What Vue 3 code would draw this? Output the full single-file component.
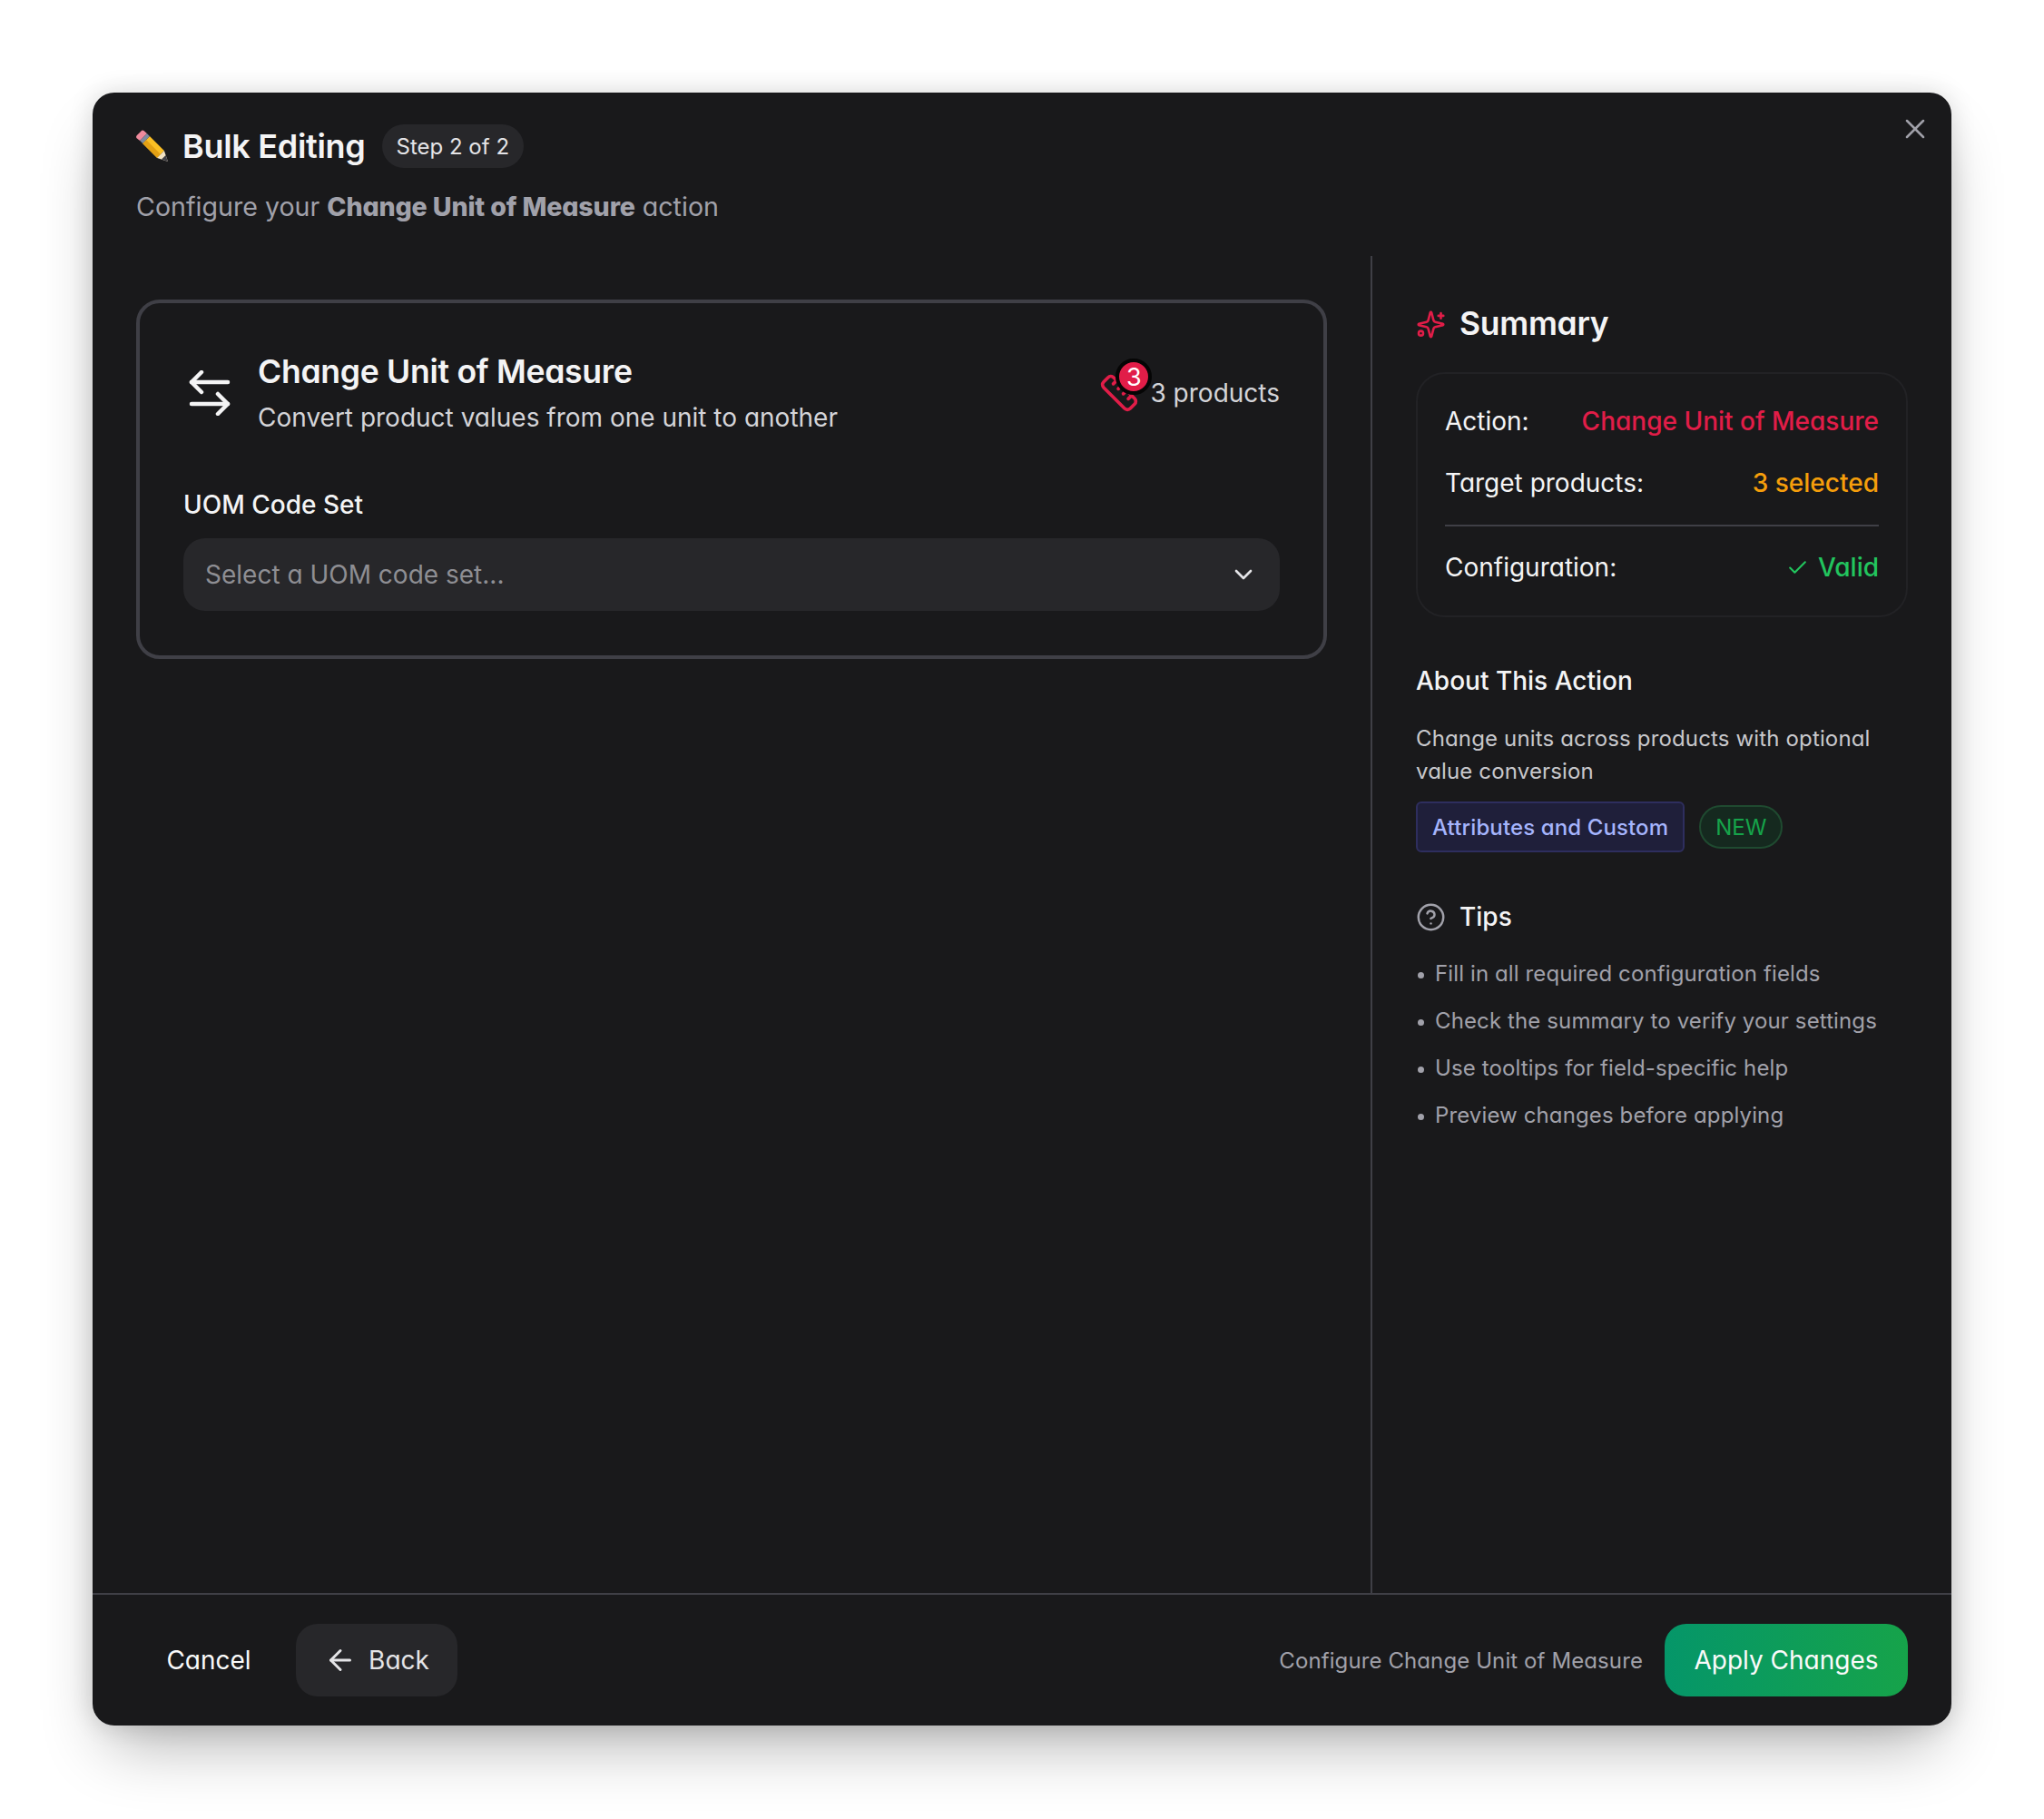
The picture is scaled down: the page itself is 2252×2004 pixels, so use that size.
<template>
  <div class="page">
    <div class="modal">
      <button class="close" aria-label="Close">
        <svg width="36" height="36" viewBox="0 0 24 24" class="ico">
          <path d="M18 6 6 18" /><path d="m6 6 12 12" />
        </svg>
      </button>

      <header class="head">
        <div class="head-top">
          <svg class="pencil" width="36" height="36" viewBox="0 0 36 36">
            <path d="M14.900 7.100 30.900 23.100 23.100 30.900 7.100 14.900Z" fill="#fbbf24" />
            <path d="M11 11 27 27 23.100 30.900 7.100 14.900Z" fill="#e3a014" />
            <path d="M30.900 23.100 35 35 23.100 30.900Z" fill="#f3e3c4" />
            <path d="M32.600 28 35 35 28 32.600Z" fill="#3f3f46" />
            <path d="M11.900 4.100 14.900 7.100 7.100 14.900 4.100 11.900Z" fill="#7d8aa0" />
            <path d="M5 2 .9 6a2.500 2.500 0 0 0 0 3.500L4.100 11.900 11.900 4.100 8.500 .9A2.500 2.500 0 0 0 5 2Z" fill="#ee8a9c" />
          </svg>
          <h1 class="title">Bulk Editing</h1>
          <span class="step">Step 2 of 2</span>
        </div>
        <p class="subtitle">Configure your <strong>Change Unit of Measure</strong> action</p>
      </header>

      <div class="body">
        <main class="left">
          <section class="card">
            <div class="card-head">
              <svg class="swap" width="46" height="50" viewBox="0 0 46 50">
                <path d="M14 2 3 13l11 11" /><path d="M3 13h40" />
                <path d="M32 26l11 11-11 11" /><path d="M43 37H3" />
              </svg>
              <div class="card-titles">
                <h2 class="card-title">Change Unit of Measure</h2>
                <p class="card-sub">Convert product values from one unit to another</p>
              </div>
              <div class="products">
                <span class="ruler">
                  <svg width="44" height="44" viewBox="0 0 24 24" class="ico pink">
                    <path d="M21.300 15.300a2.400 2.400 0 0 1 0 3.400l-2.600 2.600a2.400 2.400 0 0 1-3.400 0L2.700 8.700a2.410 2.410 0 0 1 0-3.400l2.600-2.600a2.410 2.410 0 0 1 3.400 0Z" />
                    <path d="m14.500 12.500 2-2" /><path d="m11.500 9.500 2-2" /><path d="m8.500 6.500 2-2" /><path d="m17.500 15.500 2-2" />
                  </svg>
                  <span class="count">3</span>
                </span>
                <span>3 products</span>
              </div>
            </div>
            <label class="field-label">UOM Code Set</label>
            <div class="select">
              <span>Select a UOM code set...</span>
              <svg width="32" height="32" viewBox="0 0 24 24" class="ico chev"><path d="m6 9 6 6 6-6" /></svg>
            </div>
          </section>
        </main>

        <aside class="right">
          <div class="sum-head">
            <svg width="33" height="33" viewBox="0 0 24 24" class="ico pink">
              <path d="M9.937 15.500A2 2 0 0 0 8.500 14.063l-6.135-1.582a.5.5 0 0 1 0-.962L8.500 9.936A2 2 0 0 0 9.937 8.500l1.582-6.135a.5.5 0 0 1 .963 0L14.063 8.500A2 2 0 0 0 15.500 9.937l6.135 1.581a.5.5 0 0 1 0 .964L15.500 14.063a2 2 0 0 0-1.437 1.437l-1.582 6.135a.5.5 0 0 1-.963 0z" />
              <path d="M20 3v4" /><path d="M22 5h-4" />
              <circle cx="4" cy="19" r="1.800" />
            </svg>
            <h3 class="sum-title">Summary</h3>
          </div>

          <div class="sum-card">
            <div class="row"><span>Action:</span><span class="c-pink">Change Unit of Measure</span></div>
            <div class="row"><span>Target products:</span><span class="c-amber">3 selected</span></div>
            <div class="rule"></div>
            <div class="row">
              <span>Configuration:</span>
              <span class="c-green valid">
                <svg width="25" height="25" viewBox="0 0 24 24" class="ico"><path d="M20 6 9 17l-5-5" /></svg>
                Valid
              </span>
            </div>
          </div>

          <h4 class="about-title">About This Action</h4>
          <p class="about-text">Change units across products with optional value conversion</p>
          <div class="chips">
            <span class="chip-attr">Attributes and Custom</span>
            <span class="chip-new">NEW</span>
          </div>

          <div class="tips-head">
            <svg width="33" height="33" viewBox="0 0 24 24" class="ico tips-ico">
              <circle cx="12" cy="12" r="10" />
              <path d="M9.090 9a3 3 0 0 1 5.830 1c0 2-3 3-3 3" /><path d="M12 17h.01" />
            </svg>
            <span>Tips</span>
          </div>
          <ul class="tips">
            <li v-for="t in tips" :key="t">{{ t }}</li>
          </ul>
        </aside>
      </div>

      <footer class="foot">
        <button class="btn-cancel">Cancel</button>
        <button class="btn-back">
          <svg width="36" height="36" viewBox="0 0 24 24" class="ico"><path d="m12 19-7-7 7-7" /><path d="M19 12H5" /></svg>
          Back
        </button>
        <span class="foot-note">Configure Change Unit of Measure</span>
        <button class="btn-apply">Apply Changes</button>
      </footer>
    </div>
  </div>
</template>

<script setup>
const tips = [
  'Fill in all required configuration fields',
  'Check the summary to verify your settings',
  'Use tooltips for field-specific help',
  'Preview changes before applying'
]
</script>

<style>
html, body { background: #fff; }
</style>

<style scoped>
.page {
  width: 2252px;
  height: 2004px;
  padding: 102px;
  box-sizing: border-box;
  background: #fff;
  font-family: Inter, "Liberation Sans", sans-serif;
  font-feature-settings: "cv11" 1;
}
.modal {
  position: relative;
  width: 2048px;
  height: 1799px;
  display: flex;
  flex-direction: column;
  background: #19191b;
  border-radius: 24px;
  box-shadow: 0 36px 72px -18px rgba(0, 0, 0, 0.32), 0 0 28px rgba(0, 0, 0, 0.14);
  color: #fafafa;
}
.ico {
  fill: none;
  stroke: currentColor;
  stroke-width: 2;
  stroke-linecap: round;
  stroke-linejoin: round;
  flex-shrink: 0;
}
.pink { color: #e11d48; }
.close {
  position: absolute;
  top: 22px;
  right: 22px;
  padding: 0;
  display: flex;
  border: 0;
  background: none;
  color: #a1a1aa;
}
.close .ico { stroke-width: 1.7; }

.head {
  height: 180px;
  box-sizing: border-box;
  padding: 35px 48px 0;
  flex-shrink: 0;
}
.head-top {
  display: flex;
  align-items: center;
  height: 48px;
}
.pencil { margin-right: 15px; }
.title {
  margin: 0 18px 0 0;
  font-size: 36px;
  font-weight: 600;
  letter-spacing: -0.3px;
  color: #f4f4f5;
}
.step {
  height: 48px;
  display: flex;
  align-items: center;
  padding: 0 16px;
  border-radius: 24px;
  background: #27272a;
  color: #e4e4e7;
  font-size: 24px;
}
.subtitle {
  margin: 26px 0 0;
  font-size: 28.6px;
  line-height: 34px;
  color: #a1a1aa;
}
.subtitle strong { font-weight: 800; letter-spacing: -0.15px; }

.body {
  flex: 1;
  display: flex;
  min-height: 0;
}
.left {
  width: 1408px;
  box-sizing: border-box;
  padding: 48px 48px 0;
}
.card {
  height: 396px;
  box-sizing: border-box;
  padding: 54px 48px 0;
  border: 4px solid #3f3f46;
  border-radius: 26px;
}
.card-head {
  display: flex;
  align-items: center;
}
.swap {
  fill: none;
  stroke: #f4f4f5;
  stroke-width: 4.500;
  stroke-linecap: round;
  stroke-linejoin: round;
  margin-left: 6px;
  margin-right: 30px;
}
.card-titles { flex: 1; }
.card-title {
  margin: 0;
  font-size: 35.6px;
  line-height: 44px;
  font-weight: 600;
  letter-spacing: -0.3px;
  color: #f4f4f5;
}
.card-sub {
  margin: 10px 0 0;
  font-size: 28px;
  line-height: 36px;
  color: #d4d4d8;
}
.products {
  display: flex;
  align-items: center;
  gap: 12px;
  font-size: 28px;
  color: #d4d4d8;
}
.ruler {
  position: relative;
  display: flex;
}
.count {
  position: absolute;
  top: -16px;
  right: -14px;
  width: 32px;
  height: 32px;
  box-sizing: content-box;
  border: 4px solid #050505;
  border-radius: 50%;
  background: #e11d48;
  color: #fff;
  font-size: 27px;
  display: flex;
  align-items: center;
  justify-content: center;
}
.field-label {
  display: block;
  margin: 61px 0 20px;
  font-size: 28px;
  line-height: 34px;
  font-weight: 500;
  color: #f4f4f5;
}
.select {
  height: 80px;
  box-sizing: border-box;
  padding: 0 24px;
  display: flex;
  align-items: center;
  justify-content: space-between;
  border-radius: 24px;
  background: #27272a;
  color: #8e8e93;
  font-size: 28px;
}
.chev { color: #e4e4e7; }

.right {
  flex: 1;
  border-left: 2px solid #3f3f46;
  box-sizing: border-box;
  padding: 53px 48px 0;
}
.sum-head {
  display: flex;
  align-items: center;
  gap: 15px;
}
.sum-head .ico { stroke-width: 1.9; }
.sum-title {
  margin: 0;
  font-size: 35.5px;
  line-height: 44px;
  font-weight: 600;
  letter-spacing: -0.3px;
  color: #f4f4f5;
}
.sum-card {
  margin-top: 31px;
  height: 270px;
  box-sizing: border-box;
  padding: 34px 30px 0;
  border: 2px solid #222225;
  border-radius: 32px;
}
.row {
  display: flex;
  justify-content: space-between;
  align-items: center;
  height: 36px;
  font-size: 28px;
  color: #f4f4f5;
}
.row + .row { margin-top: 32px; }
.rule {
  margin: 28px 0 27px;
  height: 2px;
  background: #3f3f46;
}
.c-pink { color: #e11d48; font-weight: 500; }
.c-amber { color: #f59e0b; font-weight: 500; }
.c-green { color: #22c55e; font-weight: 500; }
.valid {
  display: flex;
  align-items: center;
  gap: 10px;
}
.about-title {
  margin: 52px 0 0;
  font-size: 28px;
  line-height: 36px;
  font-weight: 500;
  color: #f4f4f5;
}
.about-text {
  margin: 28px 0 0;
  font-size: 24px;
  letter-spacing: 0.15px;
  line-height: 36px;
  color: #c8c8cc;
}
.chips {
  margin-top: 15px;
  display: flex;
  align-items: center;
  gap: 16px;
}
.chip-attr {
  height: 56px;
  box-sizing: border-box;
  padding: 0 16px;
  display: flex;
  align-items: center;
  border: 2px solid #2e2e5e;
  border-radius: 6px;
  background: #1f1f3a;
  color: #a5b4fc;
  font-size: 24px;
  letter-spacing: 0.12px;
  font-weight: 500;
}
.chip-new {
  height: 48px;
  box-sizing: border-box;
  padding: 0 16px;
  display: flex;
  align-items: center;
  border: 2px solid #1f4a30;
  border-radius: 24px;
  background: #15291f;
  color: #16a34a;
  font-size: 24px;
}
.tips-head {
  margin-top: 53px;
  display: flex;
  align-items: center;
  gap: 15px;
  height: 36px;
  font-size: 28px;
  font-weight: 500;
  color: #f4f4f5;
}
.tips-ico { color: #a1a1aa; stroke-width: 1.800; }
.tips {
  list-style: none;
  margin: 27px 0 0;
  padding: 0;
  font-size: 24px;
  letter-spacing: 0.12px;
  color: #a1a1aa;
}
.tips li {
  position: relative;
  height: 36px;
  line-height: 36px;
  margin-bottom: 16px;
  padding-left: 21px;
}
.tips li::before {
  content: "";
  position: absolute;
  left: 2px;
  top: 16px;
  width: 7px;
  height: 7px;
  border-radius: 50%;
  background: #a1a1aa;
}

.foot {
  height: 146px;
  flex-shrink: 0;
  box-sizing: border-box;
  padding: 0 48px;
  display: flex;
  align-items: center;
  border-top: 2px solid #3f3f46;
  font-size: 28px;
}
.foot button {
  height: 80px;
  padding: 0;
  border: 0;
  font: inherit;
  font-feature-settings: inherit;
  border-radius: 24px;
  display: flex;
  align-items: center;
}
.btn-cancel {
  width: 160px;
  margin-right: 16px;
  justify-content: center;
  background: none;
  color: #fafafa;
}
.btn-back {
  width: 178px;
  justify-content: center;
  gap: 13px;
  background: #27272a;
  color: #e4e4e7;
}
.foot-note {
  margin-left: auto;
  margin-right: 24px;
  font-size: 24px;
  letter-spacing: 0.1px;
  color: #a1a1aa;
}
.btn-apply {
  width: 268px;
  justify-content: center;
  background: linear-gradient(90deg, #059669, #16a34a);
  color: #fafafa;
}
</style>
